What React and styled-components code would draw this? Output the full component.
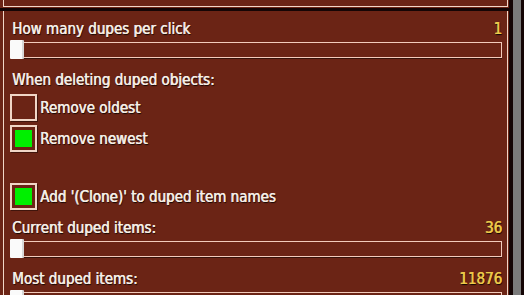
import React from 'react';
import styled, {createGlobalStyle} from 'styled-components';

const Global = createGlobalStyle`
  html, body {
    margin: 0;
    padding: 0;
    background: #140505;
  }
  * { box-sizing: border-box; }
`;

const BROWN = '#6b2415';
const LINE = '#f1d6c6';
const SHADOW = '0.6px 0 0 currentColor, 1px 1px 1px rgba(0, 0, 0, 0.9)';

const Frame = styled.div`
  width: 524px;
  height: 295px;
  overflow: hidden;
  display: flex;
  background: #140505;
  font-family: "DejaVu Sans Condensed", "Liberation Sans", sans-serif;
  font-size: 15px;
  color: #f6eee6;
`;

const Column = styled.div`
  width: 509px;
  display: flex;
  flex-direction: column;
  gap: 3px;
`;

const HeaderPanel = styled.div`
  height: 8px;
  background: ${BROWN};
  padding: 0 1px 1px 3px;
`;

const HeaderInner = styled.div`
  height: 7px;
  border: 1px solid ${LINE};
  border-top: none;
`;

const ContentPanel = styled.div`
  flex: 1;
  background: ${BROWN};
  padding: 0 1px 0 3px;
`;

const ContentInner = styled.div`
  height: 100%;
  border-left: 1px solid ${LINE};
  border-right: 1px solid ${LINE};
  padding: 9px 4px 0 6px;
  display: flex;
  flex-direction: column;
`;

const Gutter = styled.div`
  width: 15px;
  display: flex;
  padding-left: 4px;
`;

const ScrollTrack = styled.div`
  width: 8px;
  background: #7b7b7b;
`;

const LabelRow = styled.div`
  display: flex;
  justify-content: space-between;
  align-items: baseline;
  height: 18px;
  line-height: 18px;
  padding: 0 1px 0 2px;
  margin-top: ${p => p.$top || 0}px;
  text-shadow: ${SHADOW};
`;

const Value = styled.span`
  color: #ecc94a;
`;

const SliderWrap = styled.div`
  position: relative;
  height: 19px;
  margin-top: 2px;
`;

const Track = styled.div`
  margin: 2px 1px 0 2px;
  height: 16px;
  border: 1px solid #f3cbbb;
  box-shadow: 0 1px 0 rgba(0, 0, 0, 0.5);
`;

const Thumb = styled.div`
  position: absolute;
  left: 0;
  top: 0;
  width: 14px;
  height: 19px;
  background: #fafafa;
  border-right: 2px solid #d8d8d8;
  border-radius: 1px;
`;

const CheckRow = styled.div`
  display: flex;
  align-items: center;
  gap: 3px;
  margin-top: ${p => p.$top || 0}px;
  text-shadow: ${SHADOW};
`;

const Box = styled.div`
  width: 27px;
  height: 27px;
  border: 2px solid ${LINE};
  padding: 3px;
  box-shadow: 1px 1px 0 rgba(0, 0, 0, 0.4);
`;

const Fill = styled.div`
  width: 100%;
  height: 100%;
  background: ${p => (p.$on ? '#00f000' : 'transparent')};
`;

const Slider = () => (
  <SliderWrap>
    <Track />
    <Thumb />
  </SliderWrap>
);

const Check = ({on, label, top}) => (
  <CheckRow $top={top}>
    <Box>
      <Fill $on={on} />
    </Box>
    <span>{label}</span>
  </CheckRow>
);

const App = () => (
  <Frame>
    <Global />
    <Column>
      <HeaderPanel>
        <HeaderInner />
      </HeaderPanel>
      <ContentPanel>
        <ContentInner>
          <LabelRow>
            <span>How many dupes per click</span>
            <Value>1</Value>
          </LabelRow>
          <Slider />
          <LabelRow $top={12}>
            <span>When deleting duped objects:</span>
          </LabelRow>
          <Check top={5} label="Remove oldest" />
          <Check top={4} on label="Remove newest" />
          <Check top={31} on label="Add '(Clone)' to duped item names" />
          <LabelRow $top={9}>
            <span>Current duped items:</span>
            <Value>36</Value>
          </LabelRow>
          <Slider />
          <LabelRow $top={12}>
            <span>Most duped items:</span>
            <Value>11876</Value>
          </LabelRow>
          <Slider />
        </ContentInner>
      </ContentPanel>
    </Column>
    <Gutter>
      <ScrollTrack />
    </Gutter>
  </Frame>
);

export default App;
